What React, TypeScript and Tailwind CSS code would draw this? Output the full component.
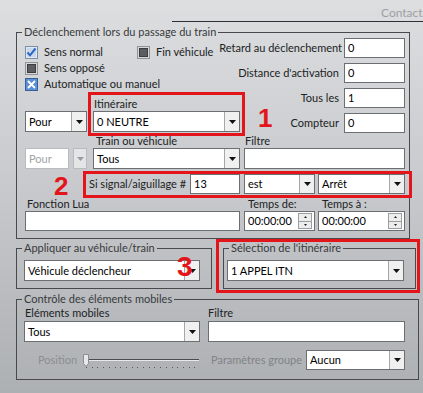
import React from "react";

// small down arrow used by the combo boxes
function Arrow({ color = "#111" }: { color?: string }) {
    return (
        <svg width="7" height="4" viewBox="0 0 7 4">
            <path d="M0 0h7L3.5 4z" fill={color} />
        </svg>
    );
}

interface ComboProps {
    value: string;
    className?: string;
    short?: boolean;
}

const Combo = ({ value, className = "", short = false }: ComboProps) => {
    return (
        <div className={`flex shrink-0 ${short ? "h-[20px]" : "h-[21px]"} border border-[#6c6f72] bg-white ${className}`}>
            <span className="flex-1 truncate pl-[3px] text-black self-center">{value}</span>
            <span className="flex w-[15px] items-center justify-center border-l border-[#a5a8ab] bg-[#f0f0f0]">
                <Arrow />
            </span>
        </div>
    );
}

const DisabledCombo = ({ value }: { value: string }) => {
    return (
        <div className="flex h-[21px] w-[62px] shrink-0">
            <span className="flex w-[44px] items-center border border-[#b9bcbf] bg-white pl-[3px] text-[#a0a2a5]">{value}</span>
            <span className="ml-[4px] flex w-[14px] items-center justify-center border border-[#b9bcbf] bg-[#e4e5e6]">
                <Arrow color="#9a9c9f" />
            </span>
        </div>
    );
}

const TextBox = ({ value = "", className = "" }: { value?: string; className?: string }) => {
    return (
        <div className={`flex shrink-0 items-center border border-[#6c6f72] bg-white pl-[3px] text-black ${className}`}>
            {value}
        </div>
    );
}

const Spinner = ({ className = "" }: { className?: string }) => {
    return (
        <div className={`flex h-[20px] shrink-0 border border-[#6c6f72] bg-white ${className}`}>
            <span className="flex-1 self-center pl-[3px] text-black">00:00:00</span>
            <span className="my-[1px] mr-[2px] flex w-[14px] flex-col border border-[#9c9fa2] bg-[#ededed]">
                <span className="flex flex-1 items-center justify-center border-b border-[#9c9fa2]">
                    <svg width="3" height="2" viewBox="0 0 3 2"><path d="M0 2h3L1.5 0z" fill="#222" /></svg>
                </span>
                <span className="flex flex-1 items-center justify-center">
                    <svg width="3" height="2" viewBox="0 0 3 2"><path d="M0 0h3L1.5 2z" fill="#222" /></svg>
                </span>
            </span>
        </div>
    );
}

const Check = ({ kind }: { kind: "check" | "off" | "x" }) => {
    if (kind === "check") {
        return (
            <svg width="13" height="13" viewBox="0 0 13 13" className="shrink-0">
                <rect x="0.5" y="0.5" width="12" height="12" fill="#dfe7f1" stroke="#7b8fa8" />
                <rect x="2" y="2" width="9" height="9" fill="#c9d8ea" />
                <path d="M2.5 6.5l2.5 2.8L10.5 2.5" fill="none" stroke="#2a68c4" strokeWidth="2" />
            </svg>
        );
    }
    if (kind === "x") {
        return (
            <svg width="13" height="13" viewBox="0 0 13 13" className="shrink-0">
                <rect x="0.5" y="0.5" width="12" height="12" fill="#5d8fd2" stroke="#34609c" />
                <path d="M3 3l7 7M10 3l-7 7" stroke="#ffffff" strokeWidth="1.8" />
            </svg>
        );
    }
    return (
        <svg width="13" height="13" viewBox="0 0 13 13" className="shrink-0">
            <rect x="0.5" y="0.5" width="12" height="12" fill="#d6d8da" stroke="#909396" />
            <rect x="2.5" y="2.5" width="8" height="8" fill="#5b5d60" stroke="#3b3c3e" />
        </svg>
    );
}

const Slider = () => {
    const ticks = [...Array(20)].map((_, i) => 3 + i * 5.7);
    return (
        <svg width="117" height="20" viewBox="0 0 117 20" className="shrink-0">
            <line x1="5" y1="9.5" x2="116" y2="9.5" stroke="#4a4c4f" />
            <line x1="5" y1="10.5" x2="116" y2="10.5" stroke="#e8e8e8" />
            {ticks.map((x, i) => (
                <rect key={i} x={Math.round(x)} y="17" width="1" height="1" fill="#55585b" />
            ))}
            <path d="M0.5 4.5h5v9l-2.5 3l-2.5-3z" fill="#e6e7e8" stroke="#8b8e91" />
        </svg>
    );
}

const GroupBox = ({ title, className, children }: { title: string; className: string; children?: React.ReactNode }) => {
    return (
        <fieldset className={`min-w-0 border border-[#47494c] ${className}`}>
            <legend className="ml-[5px] px-[2px] leading-[14px] text-[#383a3c]">{title}</legend>
            {children}
        </fieldset>
    );
}

export default function App() {

    const counters = [
        ["Retard au déclenchement", "0"],
        ["Distance d'activation", "0"],
        ["Tous les", "1"],
        ["Compteur", "0"],
    ];

    return (
        <div className="relative h-[393px] w-[423px] overflow-hidden bg-linear-to-b from-[#dcdee0] via-[#c6c8cb] to-[#adb0b3] font-[Lato,'Liberation_Sans',sans-serif] text-[11px] leading-[14px] text-[#202224]">

            {/* tab strip */}
            <div className="ml-[172px] h-[22px] whitespace-nowrap border-b border-[#2e3033] pl-[209px] pt-[6px] text-[12px] text-[#9da0a3]">Contact</div>

            {/* trigger settings */}
            <GroupBox title="Déclenchement lors du passage du train" className="ml-[16px] mt-[3px] h-[214px] w-[394px]">
                <div className="flex h-[94px]">
                    {/* checkboxes + route selection; the combos run past the column on purpose */}
                    <div className="ml-[8px] w-[190px] shrink-0">
                        <div className="mt-[5px] flex h-[16px] items-center">
                            <div className="flex w-[112px] items-center gap-[6px]"><Check kind="check" />Sens normal</div>
                            <div className="flex items-center gap-[6px] whitespace-nowrap"><Check kind="off" />Fin véhicule</div>
                        </div>
                        <div className="flex h-[16px] items-center gap-[6px]"><Check kind="off" />Sens opposé</div>
                        <div className="flex h-[16px] items-center gap-[6px] whitespace-nowrap"><Check kind="x" />Automatique ou manuel</div>
                        <div className="mt-[5px] h-[14px] pl-[69px]">Itinéraire</div>
                        <div className="flex w-max">
                            <Combo value="Pour" className="w-[62px]" />
                            <Combo value="0 NEUTRE" className="ml-[6px] w-[147px]" />
                        </div>
                    </div>
                    <div className="-mt-px flex min-w-0 flex-1 flex-col items-end gap-[5px] pr-[4px]">
                        {counters.map(([label, value]) => (
                            <div key={label} className="flex h-[20px] items-center">
                                <span className={`${label === "Retard au déclenchement" ? "mr-[2px]" : "mr-[5px]"} whitespace-nowrap`}>{label}</span>
                                <TextBox value={value} className="h-[20px] w-[61px]" />
                            </div>
                        ))}
                    </div>
                </div>

                <div className="mt-px flex h-[14px]">
                    <span className="ml-[79px] w-[149px]">Train ou véhicule</span>
                    <span>Filtre</span>
                </div>
                <div className="ml-[8px] flex">
                    <DisabledCombo value="Pour" />
                    <Combo value="Tous" className="ml-[6px] w-[147px]" />
                    <TextBox className="ml-[4px] h-[21px] w-[161px]" />
                </div>

                <div className="ml-[8px] mt-[5px] flex h-[20px] items-center">
                    <span className="ml-[64px] w-[101px] whitespace-nowrap">Si signal/aiguillage #</span>
                    <TextBox value="13" className="h-[20px] w-[50px]" />
                    <Combo value="est" short className="ml-[4px] w-[71px]" />
                    <Combo value="Arrêt" short className="ml-[3px] w-[87px]" />
                </div>

                <div className="mt-[3px] flex h-[14px]">
                    <span className="ml-[10px] w-[221px]">Fonction Lua</span>
                    <span className="w-[74px]">Temps de:</span>
                    <span>Temps à :</span>
                </div>
                <div className="ml-[8px] flex">
                    <TextBox className="h-[20px] w-[215px]" />
                    <Spinner className="ml-[4px] w-[71px]" />
                    <Spinner className="ml-[3px] w-[87px]" />
                </div>
            </GroupBox>

            <div className="mt-[2px] flex">
                <GroupBox title="Appliquer au véhicule/train" className="ml-[16px] h-[48px] w-[196px]">
                    <Combo value="Véhicule déclencheur" className="ml-[7px] mt-[5px] w-[176px]" />
                </GroupBox>
                <GroupBox title="Sélection de l'itinéraire" className="ml-[11px] h-[48px] w-[193px]">
                    <Combo value="1 APPEL ITN" className="ml-[3px] mt-[5px] w-[177px]" />
                </GroupBox>
            </div>

            {/* moving parts */}
            <GroupBox title="Contrôle des éléments mobiles" className="ml-[16px] mt-[3px] h-[88px] w-[403px]">
                <div className="flex h-[14px]">
                    <span className="ml-[8px] w-[183px]">Eléments mobiles</span>
                    <span>Filtre</span>
                </div>
                <div className="mt-px flex">
                    <Combo value="Tous" className="ml-[7px] w-[176px]" />
                    <TextBox className="ml-[8px] h-[21px] w-[197px]" />
                </div>
                <div className="mt-[8px] flex h-[20px] items-center">
                    <span className="ml-[21px] w-[45px] text-[#8b8e91]">Position</span>
                    <Slider />
                    <span className="ml-[11px] w-[95px] whitespace-nowrap text-[#808386]">Paramètres groupe</span>
                    <Combo value="Aucun" short className="w-[99px]" />
                </div>
            </GroupBox>

            {/* red annotations */}
            <div className="absolute left-[88px] top-[92px] h-[44px] w-[157px] border-[3px] border-[#e3151b]" />
            <div className="absolute left-[83px] top-[171px] h-[27px] w-[329px] border-[3px] border-[#e3151b]" />
            <div className="absolute left-[216px] top-[239px] h-[54px] w-[204px] border-[3px] border-[#e3151b]" />
            <span className="absolute left-[258px] top-[108px] font-['Liberation_Sans',sans-serif] text-[26px] font-bold leading-[20px] text-[#e3151b]">1</span>
            <span className="absolute left-[54px] top-[176px] font-['Liberation_Sans',sans-serif] text-[26px] font-bold leading-[20px] text-[#e3151b]">2</span>
            <span className="absolute left-[177px] top-[257px] font-['Liberation_Sans',sans-serif] text-[28px] font-bold leading-[20px] text-[#e3151b]">3</span>
        </div>
    );
}
